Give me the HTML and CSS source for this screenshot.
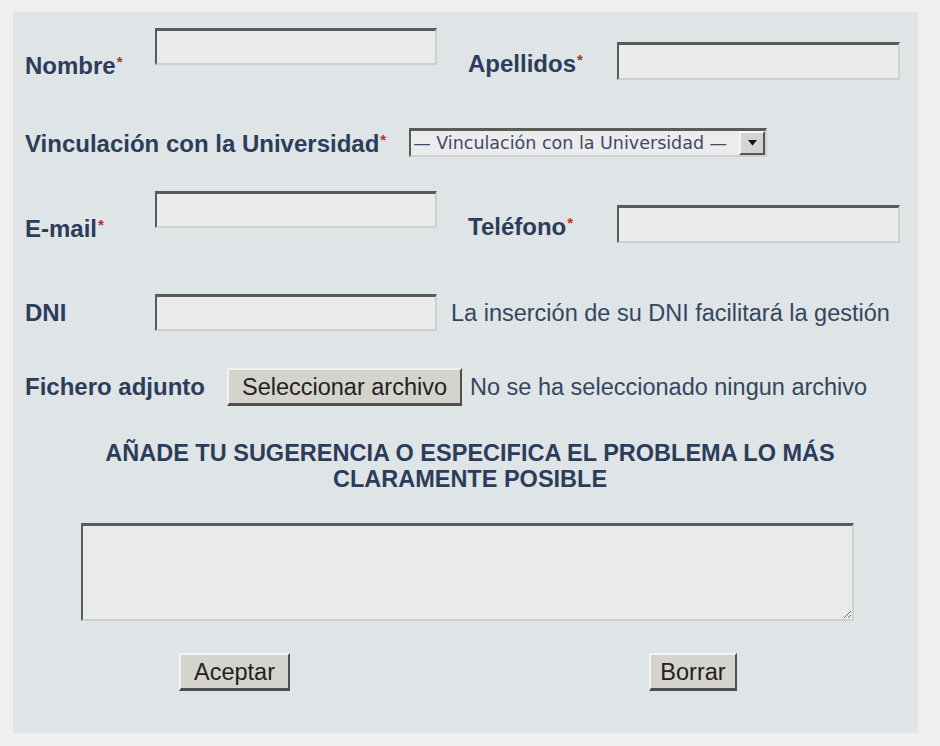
FILE: index.html
```html
<!DOCTYPE html>
<html lang="es">
<head>
<meta charset="utf-8">
<title>Sugerencias</title>
<link rel="stylesheet" href="styles.css">
</head>
<body>
<div class="panel">
  <form class="form">
    <div class="row row-pair">
      <label class="lbl lbl-a">Nombre<span class="req">*</span></label>
      <input class="field field-a" type="text">
      <label class="lbl lbl-b">Apellidos<span class="req">*</span></label>
      <input class="field field-b" type="text">
    </div>
    <div class="row row-select">
      <label class="lbl">Vinculación con la Universidad<span class="req">*</span></label>
      <span class="select-wrap">
        <select class="select"><option>— Vinculación con la Universidad —</option></select>
        <span class="select-btn"><svg width="9" height="6" viewBox="0 0 9 6"><path d="M0 0H9L4.5 5.5Z" fill="#111"/></svg></span>
      </span>
    </div>
    <div class="row row-pair row-contact">
      <label class="lbl lbl-a">E-mail<span class="req">*</span></label>
      <input class="field field-a" type="text">
      <label class="lbl lbl-b">Teléfono<span class="req">*</span></label>
      <input class="field field-b" type="text">
    </div>
    <div class="row row-dni">
      <label class="lbl lbl-a">DNI</label>
      <input class="field field-a" type="text">
      <span class="note">La inserción de su DNI facilitará la gestión</span>
    </div>
    <div class="row row-file">
      <label class="lbl">Fichero adjunto</label>
      <button type="button" class="btn btn-file">Seleccionar archivo</button>
      <span class="note note-file">No se ha seleccionado ningun archivo</span>
    </div>
    <h2 class="heading">AÑADE TU SUGERENCIA O ESPECIFICA EL PROBLEMA LO MÁS<br>CLARAMENTE POSIBLE</h2>
    <textarea class="area"></textarea>
    <div class="row row-actions">
      <button type="submit" class="btn btn-ok">Aceptar</button>
      <button type="reset" class="btn btn-reset">Borrar</button>
    </div>
  </form>
</div>
</body>
</html>
```
FILE: styles.css
```css
html, body {
  margin: 0;
  padding: 0;
  background: #efefef;
}
body {
  font-family: "Liberation Sans", Arial, sans-serif;
  color: #2c3e5a;
}
.panel {
  margin: 12px 0 0 13px;
  width: 905px;
  height: 721px;
  background: #dfe4e6;
  box-sizing: border-box;
  padding: 16px 0 0 12px;
}
.form {
  display: flex;
  flex-direction: column;
  align-items: flex-start;
}
.row {
  display: flex;
  align-items: flex-start;
}
.lbl {
  font-weight: bold;
  font-size: 24px;
  line-height: 28px;
  color: #2b3d5b;
  white-space: nowrap;
}
.req {
  color: #c0282d;
  font-size: 15px;
  vertical-align: 7px;
  margin-left: 1px;
}
.lbl-a {
  width: 130px;
  margin-top: 20px;
}
.lbl-b {
  width: 149px;
  margin-left: 31px;
  margin-top: 18px;
}
.field {
  box-sizing: border-box;
  height: 37px;
  margin: 0;
  padding: 0 4px;
  background: #ebebea;
  border-top: 3px solid #5a5a5a;
  border-left: 2px solid #5a5a5a;
  border-right: 2px solid #cfcfcf;
  border-bottom: 2px solid #cfcfcf;
  font-family: "Liberation Sans", Arial, sans-serif;
  font-size: 20px;
}
.field-a {
  width: 282px;
}
.field-b {
  width: 283px;
  height: 38px;
  margin-top: 14px;
}
.row-select {
  margin-top: 46px;
}
.select-wrap {
  display: inline-flex;
  align-items: center;
  margin: 2px 0 0 23px;
  width: 358px;
  height: 29px;
  box-sizing: border-box;
  background: #ececec;
  border-top: 3px solid #5a5a5a;
  border-left: 2px solid #5a5a5a;
  border-right: 2px solid #d0d0d0;
  border-bottom: 2px solid #d0d0d0;
}
.select {
  appearance: none;
  -webkit-appearance: none;
  border: none;
  background: transparent;
  flex: 1;
  min-width: 0;
  height: 100%;
  padding: 0 0 0 2px;
  margin: 0;
  font-family: "DejaVu Sans", Verdana, sans-serif;
  font-size: 17.5px;
  color: #3c4a66;
  outline: none;
}
.select-btn {
  display: flex;
  align-items: center;
  justify-content: center;
  width: 26px;
  height: 24px;
  box-sizing: border-box;
  background: #d6d4cf;
  border-top: 2px solid #f5f5f5;
  border-left: 2px solid #f5f5f5;
  border-right: 2px solid #555;
  border-bottom: 2px solid #555;
}
.row-contact {
  margin-top: 33px;
}
.row-dni {
  margin-top: 51px;
  align-items: center;
}
.row-dni .lbl-a {
  margin-top: 0;
}
.note {
  font-size: 23.5px;
  line-height: 28px;
  color: #34465f;
  white-space: nowrap;
}
.row-dni .note {
  margin-left: 14px;
}
.row-file {
  margin-top: 37px;
  align-items: center;
}
.btn {
  box-sizing: border-box;
  height: 38px;
  margin: 0;
  padding: 0;
  background: #d5d3cd;
  border-top: 2px solid #f2f2f2;
  border-left: 2px solid #f2f2f2;
  border-right: 2px solid #4e4e4e;
  border-bottom: 3px solid #4e4e4e;
  font-family: "Liberation Sans", Arial, sans-serif;
  font-size: 23.5px;
  color: #222;
  line-height: 30px;
}
.btn-file {
  width: 235px;
  margin-left: 22px;
}
.note-file {
  margin-left: 8px;
}
.heading {
  margin: 34px 0 0 0;
  width: 890px;
  text-align: center;
  font-size: 23.5px;
  line-height: 26px;
  font-weight: bold;
  color: #2b3d5b;
}
.area {
  margin: 31px 0 0 56px;
  width: 773px;
  height: 98px;
  box-sizing: border-box;
  background: #e9eaea;
  border-top: 3px solid #5a5a5a;
  border-left: 2px solid #5a5a5a;
  border-right: 2px solid #d0d0d0;
  border-bottom: 2px solid #d0d0d0;
  padding: 2px;
  font-family: "Liberation Sans", Arial, sans-serif;
}
.row-actions {
  margin: 32px 0 0 154px;
}
.btn-ok {
  width: 111px;
}
.btn-reset {
  width: 88px;
  margin-left: 359px;
}
```
